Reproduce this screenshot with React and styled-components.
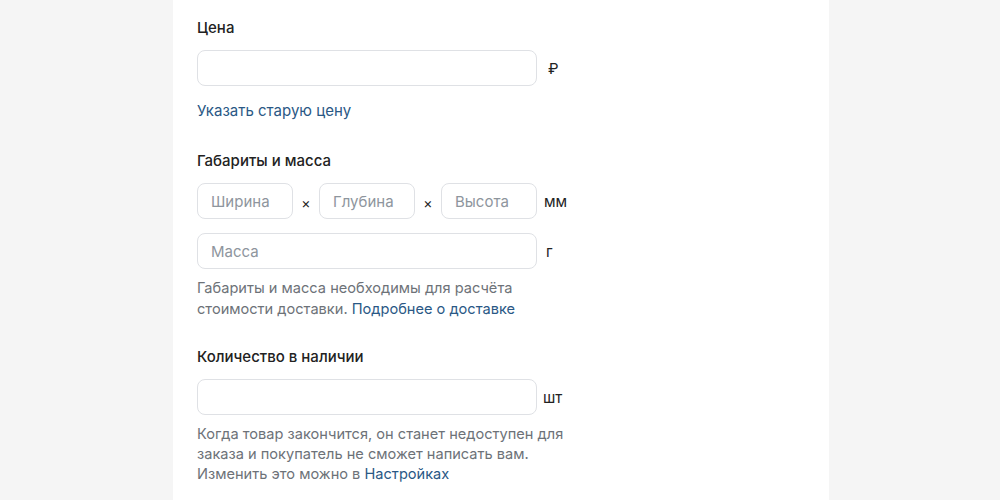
import React from 'react';
import styled, { createGlobalStyle } from 'styled-components';

const Global = createGlobalStyle`
  html, body {
    margin: 0;
    padding: 0;
    background: #f5f5f5;
    font-family: Inter, Roboto, "Liberation Sans", sans-serif;
    -webkit-font-smoothing: antialiased;
  }
`;

const Page = styled.div`
  display: flex;
  justify-content: center;
  height: 500px;
  overflow: hidden;
  padding-left: 2px;
`;

const Panel = styled.div`
  width: 656px;
  background: #ffffff;
  padding: 18px 24px 0;
  box-sizing: border-box;
`;

const Section = styled.div`
  display: flex;
  flex-direction: column;
  align-items: flex-start;
  margin-bottom: ${(p) => p.$mb || 0}px;
`;

const Label = styled.div`
  font-size: 15px;
  line-height: 20px;
  font-weight: 500;
  color: #222222;
  margin-bottom: 12px;
`;

const Row = styled.div`
  display: flex;
  align-items: center;
  margin-bottom: ${(p) => p.$mb || 0}px;
`;

const Fields = styled.div`
  display: flex;
  align-items: center;
  width: 340px;
`;

const Input = styled.input`
  box-sizing: border-box;
  width: ${(p) => (p.$small ? '96px' : '340px')};
  height: 36px;
  border: 1px solid #dfe1e5;
  border-radius: 8px;
  background: #ffffff;
  padding: 0 13px;
  font-family: Inter, Roboto, "Liberation Sans", sans-serif;
  font-size: 15px;
  color: #222222;
  outline: none;
  &::placeholder {
    color: #8e959d;
  }
`;

const Times = styled.span`
  flex: 1;
  text-align: center;
  font-size: 14px;
  color: #222222;
  padding-top: 2px;
`;

const Unit = styled.span`
  margin-left: ${(p) => p.$ml || 10}px;
  font-size: 15px;
  color: #222222;
`;

const Link = styled.a`
  color: #2a5885;
  text-decoration: none;
  font-size: inherit;
  line-height: 20px;
  cursor: pointer;
`;

const LinkLine = styled.div`
  font-size: 15px;
  line-height: 20px;
`;

const Hint = styled.p`
  margin: 0;
  font-size: 14.6px;
  line-height: 19.5px;
  color: #6d7278;
  white-space: nowrap;
`;

export default function App() {
  return (
    <>
      <Global />
      <Page>
        <Panel>
          <Section $mb={30}>
            <Label>Цена</Label>
            <Row $mb={15}>
              <Input />
              <Unit $ml={11}>₽</Unit>
            </Row>
            <LinkLine>
              <Link>Указать старую цену</Link>
            </LinkLine>
          </Section>

          <Section $mb={28}>
            <Label>Габариты и масса</Label>
            <Row $mb={14}>
              <Fields>
                <Input $small placeholder="Ширина" />
                <Times>×</Times>
                <Input $small placeholder="Глубина" />
                <Times>×</Times>
                <Input $small placeholder="Высота" />
              </Fields>
              <Unit $ml={7}>мм</Unit>
            </Row>
            <Row $mb={10}>
              <Input placeholder="Масса" />
              <Unit $ml={9}>г</Unit>
            </Row>
            <Hint>
              Габариты и масса необходимы для расчёта
              <br />
              стоимости доставки. <Link>Подробнее о доставке</Link>
            </Hint>
          </Section>

          <Section>
            <Label>Количество в наличии</Label>
            <Row $mb={10}>
              <Input />
              <Unit $ml={6}>шт</Unit>
            </Row>
            <Hint>
              Когда товар закончится, он станет недоступен для
              <br />
              заказа и покупатель не сможет написать вам.
              <br />
              Изменить это можно в <Link>Настройках</Link>
            </Hint>
          </Section>
        </Panel>
      </Page>
    </>
  );
}
